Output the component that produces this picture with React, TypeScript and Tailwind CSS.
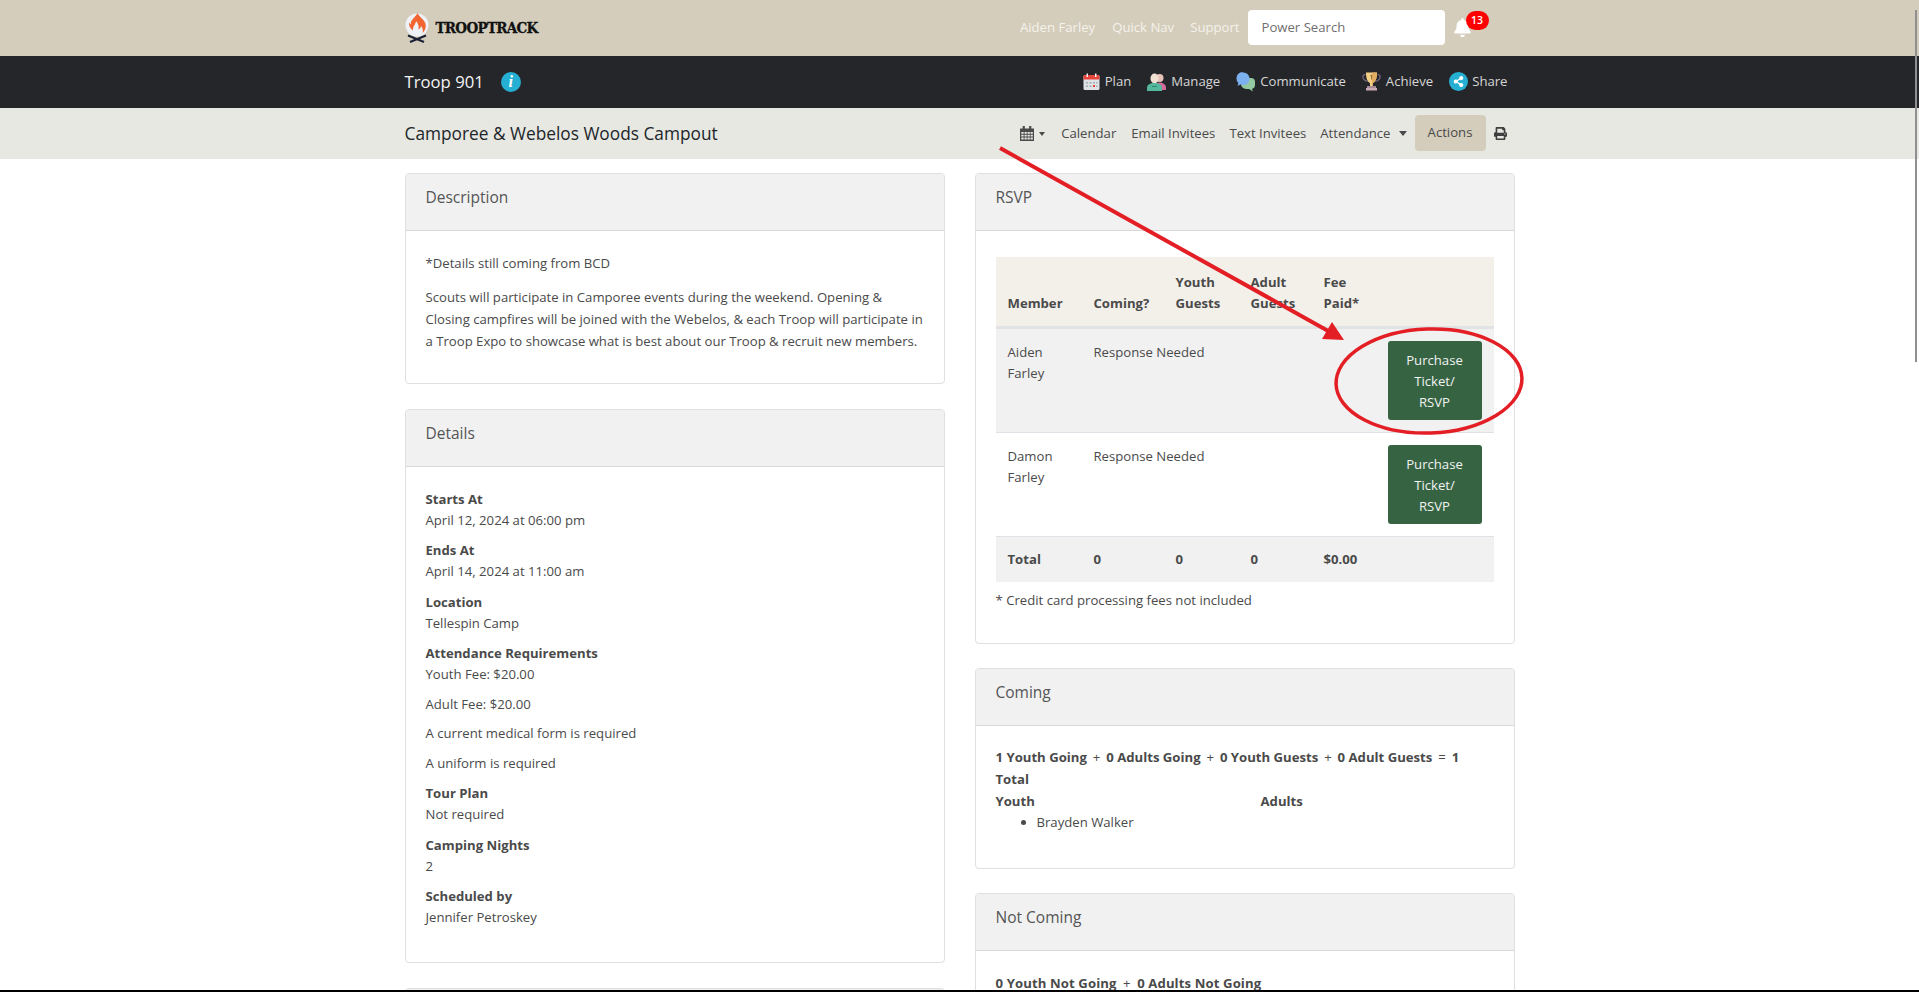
import React from 'react';
import { FaBell, FaPrint, FaShareAlt } from 'react-icons/fa';

const Caret: React.FC<{ wide?: boolean }> = ({ wide }) => (
  <span
    className={
      wide
        ? 'inline-block w-0 h-0 border-x-[4px] border-x-transparent border-t-[5px] border-t-[#4a4a4a]'
        : 'inline-block w-0 h-0 border-x-[3.5px] border-x-transparent border-t-[4px] border-t-[#4a4a4a]'
    }
  />
);

const CampfireLogo: React.FC = () => (
  <svg width="24" height="32" viewBox="0 0 24 32" className="shrink-0">
    <circle cx="12" cy="13" r="11.5" fill="#eef1f6" />
    <path d="M12.5 0.5c1 4 5.5 6 7.5 10 1.6 3.4 0.5 8-2.5 10.5 0.8-2.5 0.3-5-1.5-7-0.3 2-1.2 3-2.5 3.5 0.8-3-0.5-6.5-2.5-8.5 0 3-3.5 5-3 9.5-2.5-1.5-4.5-5-4-8.5 0.2 1 0.8 2 1.8 2.5-0.8-5 5.2-7 7.2-12.5z" fill="#f26430" />
    <path d="M3 23.5l16 6.5M21 23.5l-16 6.5" stroke="#1c2238" strokeWidth="2.2" />
  </svg>
);

const CalendarColor: React.FC = () => (
  <svg width="17" height="17" viewBox="0 0 17 17" className="shrink-0">
    <rect x="0.5" y="2" width="16" height="15" rx="1.5" fill="#dfe3e6" />
    <path d="M0.5 3.5a1.5 1.5 0 0 1 1.5-1.5h13a1.5 1.5 0 0 1 1.5 1.5v3h-16z" fill="#e8463c" />
    <rect x="3.5" y="0.5" width="1.5" height="3.5" fill="#f4f4f4" />
    <rect x="12" y="0.5" width="1.5" height="3.5" fill="#f4f4f4" />
    <path d="M3 9h2v1.5h-2zM6.5 9h2v1.5h-2zM10 9h2v1.5h-2zM13 9h1.5v1.5h-1.5zM3 12.5h2v1.5h-2zM6.5 12.5h2v1.5h-2zM13 12.5h1.5v1.5h-1.5z" fill="#a4adb4" />
    <rect x="10" y="12" width="2" height="2" fill="#e8463c" />
  </svg>
);

const PeopleColor: React.FC = () => (
  <svg width="19" height="18" viewBox="0 0 19 18" className="shrink-0">
    <circle cx="12.5" cy="5" r="4" fill="#e6c3b8" />
    <path d="M8 17v-3.5c0-2.5 2-4 4.5-4s6.5 1.5 6.5 5v2.5z" fill="#d56a9a" />
    <ellipse cx="7.5" cy="5.5" rx="4" ry="5" fill="#f3e0d4" />
    <path d="M0 18v-3.5c0-2.5 3-4.5 7.5-4.5s7.5 2 7.5 4.5v3.5z" fill="#55b79c" />
    <rect x="5" y="13" width="5" height="1" fill="#2f8a73" />
  </svg>
);

const BubblesColor: React.FC = () => (
  <svg width="19" height="20" viewBox="0 0 19 20" className="shrink-0">
    <path d="M8 6h7a4 4 0 0 1 4 4v3a4 4 0 0 1-3 3.9l1 2.6-4-2.5h-3a5 5 0 0 1-5-5v-3z" fill="#93c8a0" />
    <path d="M6.5 0.5h1a6 6 0 0 1 6 6v0.5a6 6 0 0 1-6 6h-1c-0.8 0-1.5-0.1-2.2-0.4l-2.8 1.4 0.8-3a6 6 0 0 1-1.8-4.5v-0.5a6 6 0 0 1 6-6z" fill="#7db0ef" />
  </svg>
);

const TrophyColor: React.FC = () => (
  <svg width="19" height="19" viewBox="0 0 19 19" className="shrink-0">
    <path d="M3.5 2.5c-4 0-3.5 5.500 2 7M15.500 2.500c4 0 3.500 5.500-2 7" fill="none" stroke="#7c6a86" strokeWidth="1.2" />
    <path d="M4 0.5h11c0 6-1.5 9.5-4 10.5v3h-3v-3c-2.5-1-4-4.5-4-10.5z" fill="#f3cf85" />
    <path d="M10 0.5h5c0 6-1.5 9.5-4 10.5v3h-1z" fill="#e0ac62" />
    <rect x="5" y="14" width="9" height="2" fill="#a68a9a" />
    <rect x="4" y="16" width="11" height="2.5" fill="#c9a9b2" />
    <path d="M9.3 2.8l-1 0.8v0.8l0.8-0.5v3.6h1v-4.7z" fill="#8a6a3a" />
  </svg>
);

const ShareColor: React.FC = () => (
  <span className="w-[19px] h-[19px] -mr-[1px] rounded-full bg-[#25afd2] flex items-center justify-center shrink-0">
    <FaShareAlt className="text-white text-[11px]" />
  </span>
);

const CalendarGrid: React.FC = () => (
  <svg width="14" height="15" viewBox="0 0 13 15" preserveAspectRatio="none" className="shrink-0">
    <path d="M0 2.5h13v12.5h-13z" fill="#4a4a4a" />
    <rect x="2.5" y="0" width="2" height="4" fill="#4a4a4a" />
    <rect x="8.5" y="0" width="2" height="4" fill="#4a4a4a" />
    <path d="M1.2 6h2.2v1.8h-2.2zM4.2 6h2.1v1.8h-2.1zM7 6h2.1v1.8h-2.1zM9.8 6h2.1v1.8h-2.1zM1.2 8.7h2.2v1.8h-2.2zM4.2 8.7h2.1v1.8h-2.1zM7 8.7h2.1v1.8h-2.1zM9.8 8.7h2.1v1.8h-2.1zM1.2 11.4h2.2v2.2h-2.2zM4.2 11.4h2.1v2.2h-2.1zM7 11.4h2.1v2.2h-2.1zM9.8 11.4h2.1v2.2h-2.1z" fill="#e7e8e2" />
  </svg>
);

const Card: React.FC<{ title: string; className?: string; children: React.ReactNode }> = ({ title, className, children }) => (
  <section className={`border border-[#dfdfdf] rounded-[4px] overflow-hidden ${className ?? ''}`}>
    <div className="h-[57px] bg-[#f1f1f1] border-b border-[#d8d8d8] pl-5 pt-[11px] text-[15.5px] leading-[24px] text-[#555]">
      {title}
    </div>
    {children}
  </section>
);

const DetailBlock: React.FC<{ label: string; lines: string[] }> = ({ label, lines }) => (
  <div className="mb-[9.4px]">
    <div className="font-bold leading-[21px]">{label}</div>
    {lines.map((line) => (
      <div key={line} className="leading-[21px] mb-[8.6px] last:mb-0">{line}</div>
    ))}
  </div>
);

const rsvpRows = [
  { first: 'Aiden', last: 'Farley', shaded: true },
  { first: 'Damon', last: 'Farley', shaded: false },
];

const navItems = [
  { label: 'Plan', icon: <CalendarColor /> },
  { label: 'Manage', icon: <PeopleColor /> },
  { label: 'Communicate', icon: <BubblesColor /> },
  { label: 'Achieve', icon: <TrophyColor /> },
  { label: 'Share', icon: <ShareColor /> },
];

export default function App() {
  return (
    <div className="relative h-[992px] overflow-hidden bg-white text-[#4a4a4a] text-[13.15px] font-['Open_Sans',sans-serif]">
      {/* Top bar */}
      <header className="h-[56px] bg-[#d4cdbb]">
        <div className="w-[1110px] mx-auto h-full flex items-center">
          <CampfireLogo />
          <span className="ml-[7px] text-[15px] font-bold text-[#111] tracking-[-0.7px] [-webkit-text-stroke:0.3px_#111] font-['DejaVu_Serif_Condensed','DejaVu_Serif',serif]">TROOPTRACK</span>
          <nav className="ml-auto flex items-center text-[#f4f2ec]">
            <a className="mr-[17px]">Aiden Farley</a>
            <a className="mr-[16px]">Quick Nav</a>
            <a className="mr-[8px]">Support</a>
          </nav>
          <input
            placeholder="Power Search"
            className="w-[197px] h-[35px] -mt-[2px] rounded-[4px] bg-white px-[14px] text-[13.15px] placeholder:text-[#6f6f6f] outline-none"
          />
          <div className="relative w-[70px] h-full flex-none">
            <FaBell className="absolute left-[8px] top-[18px] text-white text-[19px]" />
            <span className="absolute left-[21px] top-[11px] w-[23px] h-[19px] rounded-full bg-[#ff0000] text-white text-[10.5px] font-semibold leading-[19px] text-center">13</span>
          </div>
        </div>
      </header>

      {/* Troop bar */}
      <div className="h-[52px] bg-[#25262a]">
        <div className="w-[1110px] mx-auto h-full flex items-center">
          <span className="text-[16.7px] text-[#f4f4f4]">Troop 901</span>
          <span className="ml-[17px] w-[20px] h-[20px] rounded-full bg-[#25afd2] text-white text-[16px] font-bold italic text-center leading-[20px] font-['Liberation_Serif',serif]">i</span>
          <nav className="ml-auto mr-[7px] flex items-center gap-[16px] text-[#d6d6d6]">
            {navItems.map((item) => (
              <a key={item.label} className="flex items-center gap-[5px]">
                {item.icon}
                {item.label}
              </a>
            ))}
          </nav>
        </div>
      </div>

      {/* Event bar */}
      <div className="h-[51px] bg-[#e7e8e2]">
        <div className="w-[1110px] mx-auto h-full flex items-center">
          <h1 className="text-[17.3px] text-[#212529]">Camporee &amp; Webelos Woods Campout</h1>
          <nav className="ml-auto mr-[8px] flex items-center">
            <span className="flex items-center gap-[5px] mr-[16px]"><CalendarGrid /><Caret /></span>
            <a className="mr-[15px]">Calendar</a>
            <a className="mr-[14px]">Email Invitees</a>
            <a className="mr-[14px]">Text Invitees</a>
            <a className="mr-[8px] flex items-center gap-[8px]">Attendance <Caret wide /></a>
            <button className="w-[71px] h-[36px] -mt-[2px] rounded-[4px] bg-[#d4cdbb]">Actions</button>
            <FaPrint className="ml-[8px] text-[13px] text-[#3f3f3f]" />
          </nav>
        </div>
      </div>

      {/* Content columns */}
      <main className="w-[1110px] mx-auto mt-[14px] grid grid-cols-[540px_540px] gap-x-[30px] items-start">
        <div>
          <Card title="Description" className="h-[211px]">
            <div className="px-5 pt-[22px]">
              <p className="leading-[21px] mb-[12px]">*Details still coming from BCD</p>
              <p className="leading-[22px]">
                Scouts will participate in Camporee events during the weekend. Opening &amp; Closing campfires will be joined with the Webelos, &amp; each Troop will participate in a Troop Expo to showcase what is best about our Troop &amp; recruit new members.
              </p>
            </div>
          </Card>
          <Card title="Details" className="mt-[25px] h-[554px]">
            <div className="px-5 pt-[22px]">
              <DetailBlock label="Starts At" lines={['April 12, 2024 at 06:00 pm']} />
              <DetailBlock label="Ends At" lines={['April 14, 2024 at 11:00 am']} />
              <DetailBlock label="Location" lines={['Tellespin Camp']} />
              <DetailBlock label="Attendance Requirements" lines={['Youth Fee: $20.00', 'Adult Fee: $20.00', 'A current medical form is required', 'A uniform is required']} />
              <DetailBlock label="Tour Plan" lines={['Not required']} />
              <DetailBlock label="Camping Nights" lines={['2']} />
              <DetailBlock label="Scheduled by" lines={['Jennifer Petroskey']} />
            </div>
          </Card>
          <section className="mt-[25px] h-[60px] border border-[#dfdfdf] rounded-[4px] bg-[#f1f1f1]" />
        </div>

        <div>
          <Card title="RSVP" className="h-[471px]">
            <div className="px-5 pt-[26px]">
              <table className="w-[498px] table-fixed border-collapse">
                <colgroup>
                  <col className="w-[86px]" />
                  <col className="w-[82px]" />
                  <col className="w-[75px]" />
                  <col className="w-[73px]" />
                  <col className="w-[64px]" />
                  <col className="w-[118px]" />
                </colgroup>
                <thead>
                  <tr className="bg-[#f3f0ea] h-[70px] border-b-[3px] border-[#e0e2e4] font-bold text-left align-bottom">
                    <th className="px-[12px] pb-[12px] leading-[21px]">Member</th>
                    <th className="px-[12px] pb-[12px] leading-[21px]">Coming?</th>
                    <th className="px-[12px] pb-[12px] leading-[21px]">Youth Guests</th>
                    <th className="px-[12px] pb-[12px] leading-[21px]">Adult Guests</th>
                    <th className="px-[12px] pb-[12px] leading-[21px]">Fee Paid*</th>
                    <th />
                  </tr>
                </thead>
                <tbody>
                  {rsvpRows.map((row) => (
                    <tr key={row.first} className={`align-top border-b border-[#dee2e6] ${row.shaded ? 'bg-[#f1f1f1]' : ''}`}>
                      <td className="px-[12px] pt-[13px] leading-[21px]">{row.first}<br />{row.last}</td>
                      <td colSpan={3} className="px-[12px] pt-[13px] leading-[21px]">Response Needed</td>
                      <td />
                      <td className="px-[12px] py-[12px]">
                        <button className="block w-[94px] h-[79px] pt-[2px] rounded-[3px] bg-[#366443] text-[#f2f2f2] leading-[21px] text-center">
                          Purchase<br />Ticket/<br />RSVP
                        </button>
                      </td>
                    </tr>
                  ))}
                  <tr className="bg-[#f1f1f1] font-bold h-[46px]">
                    <td className="px-[12px] pt-[2px]">Total</td>
                    <td className="px-[12px] pt-[2px]">0</td>
                    <td className="px-[12px] pt-[2px]">0</td>
                    <td className="px-[12px] pt-[2px]">0</td>
                    <td className="px-[12px] pt-[2px]">$0.00</td>
                    <td />
                  </tr>
                </tbody>
              </table>
              <p className="mt-[8px] leading-[21px]">* Credit card processing fees not included</p>
            </div>
          </Card>
          <Card title="Coming" className="mt-[24px] h-[201px]">
            <div className="px-5 pt-[20px]">
              <p className="font-bold leading-[22px]">
                1 Youth Going <span className="font-normal px-[2.5px]">+</span> 0 Adults Going <span className="font-normal px-[2.5px]">+</span> 0 Youth Guests <span className="font-normal px-[2.5px]">+</span> 0 Adult Guests <span className="font-normal px-[2.5px]">=</span> 1<br />Total
              </p>
              <div className="grid grid-cols-[265px_1fr]">
                <div>
                  <div className="font-bold leading-[22px]">Youth</div>
                  <ul className="list-disc pl-[41px] leading-[21px]">
                    <li>Brayden Walker</li>
                  </ul>
                </div>
                <div className="font-bold leading-[22px]">Adults</div>
              </div>
            </div>
          </Card>
          <Card title="Not Coming" className="mt-[24px] h-[200px]">
            <div className="px-5 pt-[21px]">
              <p className="font-bold leading-[22px] tracking-[0.1px]">0 Youth Not Going <span className="font-normal px-[3px]">+</span> 0 Adults Not Going</p>
            </div>
          </Card>
        </div>
      </main>

      {/* Hand-drawn annotation over the page */}
      <svg className="absolute left-0 top-0 pointer-events-none" width="1919" height="992">
        <line x1="1000" y1="148" x2="1330" y2="332" stroke="#e31e24" strokeWidth="4" />
        <polygon points="1332,322 1322,339 1344,340" fill="#e31e24" />
        <ellipse cx="1429" cy="381" rx="93" ry="52" fill="none" stroke="#e31e24" strokeWidth="3.5" transform="rotate(-2 1429 381)" />
      </svg>

      {/* Overlay scrollbar thumb */}
      <div className="absolute left-[1915px] top-[10px] w-[2px] h-[352px] bg-[#8f8f8f]" />
      {/* Capture edge */}
      <div className="absolute left-0 bottom-0 w-full h-[2px] bg-black" />
    </div>
  );
}
